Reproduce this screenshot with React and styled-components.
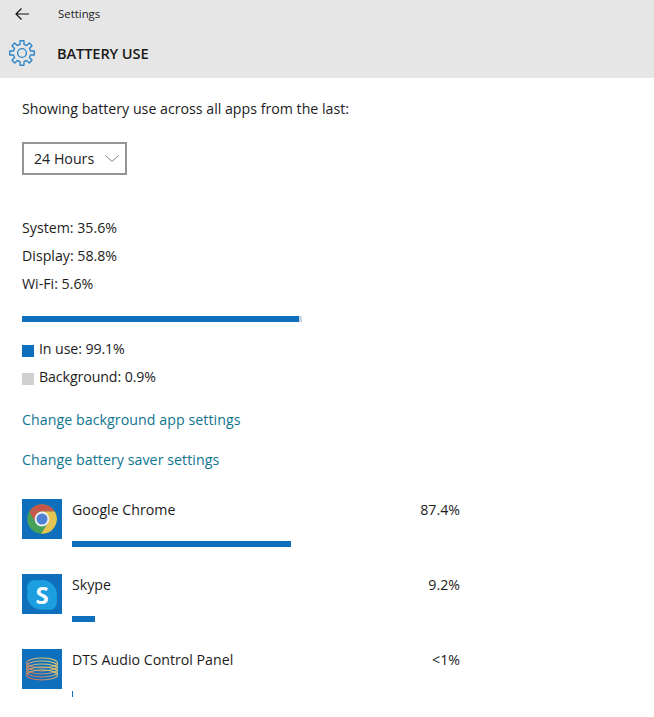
import React from "react";
import styled, { createGlobalStyle } from "styled-components";

const Global = createGlobalStyle`
  html, body { margin: 0; padding: 0; background: #fff; }
  body { font-family: "Open Sans", "Noto Sans", "Liberation Sans", sans-serif; color: #1c1c1c; overflow: hidden; }
`;
const Page = styled.div`width: 654px; height: 717px; overflow: hidden;`;
const Header = styled.header`height: 78px; background: #e6e6e6; display: flex; flex-direction: column;`;
const TopBar = styled.div`height: 28px; display: flex; align-items: center; padding-left: 15px;`;
const Back = styled.svg`width: 14px; height: 12px; margin-right: 29px; flex: none;`;
const TopTitle = styled.span`font-size: 11.4px; color: #222; position: relative; top: -1px;`;
const TitleBar = styled.div`height: 50px; display: flex; align-items: center; padding: 0 0 0 9px; box-sizing: border-box;`;
const Gear = styled.svg`width: 26px; height: 26px; margin-right: 22px; flex: none;`;
const Title = styled.h1`margin: 0; font-size: 14.6px; font-weight: 600; color: #1a1a1a; letter-spacing: -0.1px;`;
const Content = styled.main`padding: 21px 0 0 22px;`;
const Text = styled.div`font-size: 14.2px; line-height: 20px;`;
const Select = styled.div`
  margin-top: 23px; width: 105px; height: 33px; box-sizing: border-box; border: 2px solid #949494;
  display: flex; align-items: center; justify-content: space-between; padding: 0 6px 0 10px;
  font-size: 14.2px; color: #222;
`;
const Chevron = styled.svg`width: 14px; height: 7px; flex: none;`;
const Stats = styled.div`margin-top: 43px; display: flex; flex-direction: column; gap: 8px;`;
const TotalBar = styled.div`margin-top: 22px; width: 280px; height: 6px; background: #c6d6e6; display: flex;`;
const Fill = styled.div`height: 100%; background: #0e6fbd;`;
const Legend = styled.div`margin-top: 17px; display: flex; flex-direction: column; gap: 8px;`;
const LegendRow = styled.div`display: flex; align-items: center; gap: 5px; letter-spacing: -0.1px;`;
const Swatch = styled.span`width: 12px; height: 12px; margin-top: 4px; background: ${p => p.$color};`;
const Links = styled.div`margin-top: 23px; display: flex; flex-direction: column; gap: 20px;`;
const Link = styled.a`font-size: 14.2px; line-height: 20px; letter-spacing: 0.06px; color: #0f7490;`;
const Apps = styled.div`margin-top: 29px; display: flex; flex-direction: column; gap: 15px;`;
const AppRow = styled.div`display: flex; gap: 10px; height: 60px;`;
const AppIcon = styled.div`width: 40px; height: 40px; background: #0e6fbd; flex: none; display: flex;`;
const AppBody = styled.div`width: 388px; display: flex; flex-direction: column;`;
const AppLine = styled.div`display: flex; justify-content: space-between; font-size: 14.2px; line-height: 20px; padding-top: 1px;`;
const AppBar = styled.div`margin-top: 21px; height: 6px; background: #0e6fbd;`;

const gearPath = (() => {
  const teeth = 8, rOut = 12.4, rIn = 8.8, cx = 13, cy = 13;
  const step = (Math.PI * 2) / teeth;
  const pts = [];
  for (let i = 0; i < teeth; i++) {
    const a = i * step - Math.PI / 2;
    [[rIn, -0.3], [rOut, -0.2], [rOut, 0.2], [rIn, 0.3]].forEach(([r, f]) => {
      const t = a + f * step;
      pts.push(`${(cx + r * Math.cos(t)).toFixed(2)} ${(cy + r * Math.sin(t)).toFixed(2)}`);
    });
  }
  return `M${pts.join("L")}Z`;
})();

const Chrome = () => (
  <svg width="40" height="40" viewBox="0 0 40 40">
    <circle cx="20" cy="20" r="14.8" fill="#45a05a" />
    <path d="M7.2 12.6 A14.8 14.8 0 0 1 32.8 12.6 L20 12.6 Z" fill="#c9564a" />
    <path d="M7.2 12.6 L14 24 L20 12.6 Z" fill="#c9564a" />
    <path d="M32.8 12.6 A14.8 14.8 0 0 1 19 34.8 L26 24 L20 12.6 Z" fill="#e4c452" />
    <circle cx="20" cy="20" r="7.4" fill="#efefef" />
    <circle cx="20" cy="20" r="5.5" fill="#4f80d4" />
  </svg>
);
const SkypeBadge = styled.div`
  position: relative; width: 40px; height: 40px; display: flex; align-items: center; justify-content: center;
  font: 700 24px "Open Sans", sans-serif; color: #f4fbff;
`;
const SkypeShape = styled.svg`position: absolute; inset: 0;`;
const SkypeLetter = styled.span`position: relative; line-height: 1; top: 1px;`;
const Skype = () => (
  <SkypeBadge>
    <SkypeShape width="40" height="40" viewBox="0 0 40 40">
      <circle cx="20" cy="21" r="15" fill="#1d9ee0" />
      <circle cx="13" cy="14" r="8" fill="#1d9ee0" />
      <circle cx="27" cy="28" r="8" fill="#1d9ee0" />
    </SkypeShape>
    <SkypeLetter>S</SkypeLetter>
  </SkypeBadge>
);
const Dts = () => (
  <svg width="40" height="40" viewBox="0 0 40 40" fill="none" strokeWidth="1.1">
    <defs>
      <linearGradient id="coil" x1="0" y1="1" x2="1" y2="0">
        <stop offset="0" stopColor="#d0604c" />
        <stop offset="0.5" stopColor="#c9a878" />
        <stop offset="1" stopColor="#ecd968" />
      </linearGradient>
    </defs>
    {[14, 17, 20, 23, 26].map(y => (
      <ellipse key={y} cx="20" cy={y} rx="15.5" ry="5" stroke="url(#coil)" />
    ))}
  </svg>
);

const rows = [
  { name: "Google Chrome", pct: "87.4%", w: 219, icon: <Chrome /> },
  { name: "Skype", pct: "9.2%", w: 23, icon: <Skype /> },
  { name: "DTS Audio Control Panel", pct: "<1%", w: 1, icon: <Dts /> },
];

export default function App() {
  return (
    <Page>
      <Global />
      <Header>
        <TopBar>
          <Back viewBox="0 0 14 12" fill="none" stroke="#111" strokeWidth="1.2">
            <path d="M14 6H1M6.5 .5L1 6l5.5 5.5" />
          </Back>
          <TopTitle>Settings</TopTitle>
        </TopBar>
        <TitleBar>
          <Gear viewBox="0 0 26 26" fill="none" stroke="#2f86c8" strokeWidth="1.4" strokeLinejoin="round">
            <path d={gearPath} />
            <circle cx="13" cy="13" r="4.4" />
          </Gear>
          <Title>BATTERY USE</Title>
        </TitleBar>
      </Header>
      <Content>
        <Text>Showing battery use across all apps from the last:</Text>
        <Select>
          24 Hours
          <Chevron viewBox="0 0 14 7" fill="none" stroke="#808080" strokeWidth="1">
            <path d="M.5 .5L7 6.5l6.5-6" />
          </Chevron>
        </Select>
        <Stats>
          <Text>System: 35.6%</Text>
          <Text>Display: 58.8%</Text>
          <Text>Wi-Fi: 5.6%</Text>
        </Stats>
        <TotalBar><Fill style={{ width: "99.1%" }} /></TotalBar>
        <Legend>
          <LegendRow><Swatch $color="#0e6fbd" /><Text>In use: 99.1%</Text></LegendRow>
          <LegendRow><Swatch $color="#cfcfcf" /><Text>Background: 0.9%</Text></LegendRow>
        </Legend>
        <Links>
          <Link>Change background app settings</Link>
          <Link>Change battery saver settings</Link>
        </Links>
        <Apps>
          {rows.map(r => (
            <AppRow key={r.name}>
              <AppIcon>{r.icon}</AppIcon>
              <AppBody>
                <AppLine><span>{r.name}</span><span>{r.pct}</span></AppLine>
                <AppBar style={{ width: r.w }} />
              </AppBody>
            </AppRow>
          ))}
        </Apps>
      </Content>
    </Page>
  );
}
